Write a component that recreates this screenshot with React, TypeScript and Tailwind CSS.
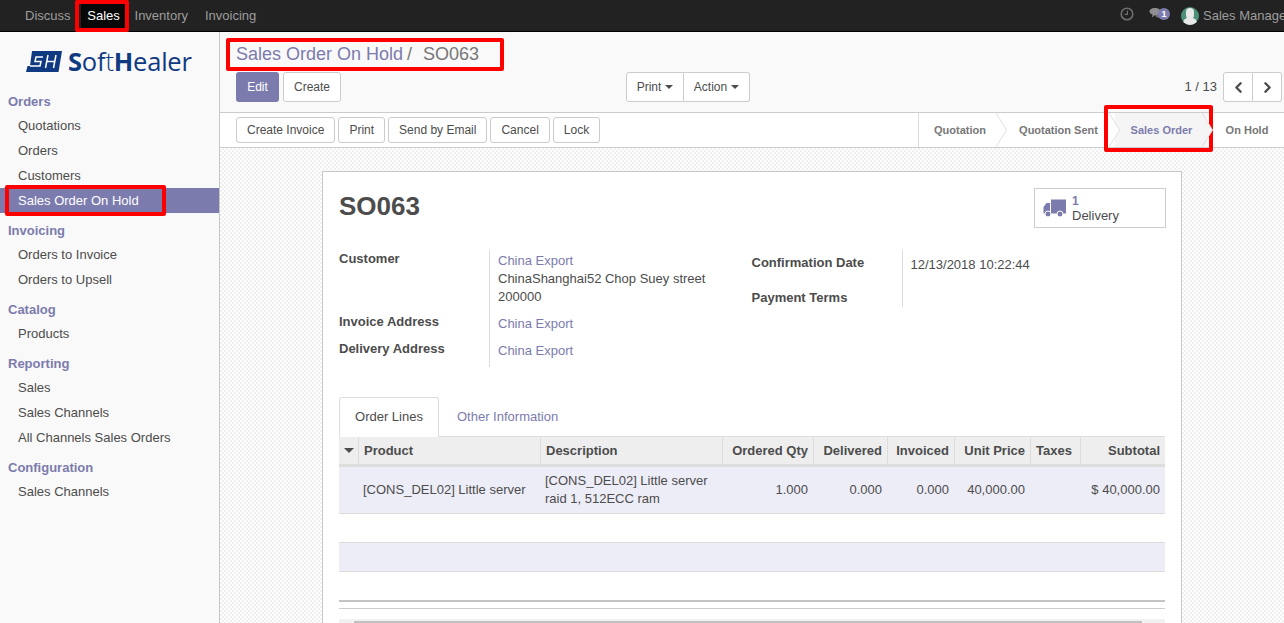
import { ChevronLeft, ChevronRight } from "lucide-react";

const btn =
  "h-[26px] px-[10px] bg-white border border-[#ccc] rounded-[3px] text-[12px] text-[#4c4c4c] flex items-center";

const menu = [
  { title: "Orders", items: ["Quotations", "Orders", "Customers", "Sales Order On Hold"] },
  { title: "Invoicing", items: ["Orders to Invoice", "Orders to Upsell"] },
  { title: "Catalog", items: ["Products"] },
  { title: "Reporting", items: ["Sales", "Sales Channels", "All Channels Sales Orders"] },
  { title: "Configuration", items: ["Sales Channels"] },
];

function RedBox({ className }: { className: string }) {
  return <div className={"absolute border-[4px] border-[#f00] rounded-[2px] pointer-events-none " + className} />;
}

function TopBar() {
  return (
    <header className="h-[32px] bg-[#222] border-b border-black flex items-stretch text-[13px] text-[#9d9d9d] shrink-0">
      <nav className="flex pl-[15px]">
        <a className="px-[10px] flex items-center">Discuss</a>
        <a className="px-[10px] flex items-center bg-[#080808] text-white w-[46px] justify-center">Sales</a>
        <a className="px-[10px] flex items-center ml-[-2px]">Inventory</a>
        <a className="px-[10px] flex items-center ml-[-3px]">Invoicing</a>
      </nav>
      <div className="ml-auto flex items-center overflow-hidden w-[177px] shrink-0">
        <svg width="14" height="14" viewBox="0 0 14 14" className="ml-[13px] mt-[-3px] shrink-0" fill="none" stroke="#6f6f6f" strokeWidth="1.6">
          <circle cx="7" cy="7" r="5.8" />
          <path d="M7.4 3.6V7.4H4.6" strokeWidth="1.2" />
        </svg>
        <div className="relative ml-[15px] w-[21px] h-[13px] shrink-0 mt-[-3px]">
          <svg width="17" height="13" viewBox="0 0 17 13" className="absolute left-0 top-0">
            <path d="M11 3c3 0 5 1.500 5 3.500 0 1.500-1 2.500-2.500 3L14 12l-3-2C8 10 6 8.500 6 6.500S8 3 11 3z" fill="#6f6f6f" />
            <path d="M6 0c3 0 5.500 1.500 5.500 3.500S9 7 6 7L3 9.500l.6-2.800C1.800 6 .5 5 .5 3.500 .5 1.500 3 0 6 0z" fill="#8f8f8f" />
          </svg>
          <span className="absolute left-[9px] top-0 w-[12px] h-[12px] rounded-full bg-[#7c7bad] text-white text-[9px] leading-[12px] text-center font-bold">1</span>
        </div>
        <div className="w-[18px] h-[18px] rounded-full bg-[#4d9078] ml-[11px] shrink-0 overflow-hidden relative">
          <div className="absolute left-[5px] top-[1px] w-[8px] h-[11px] rounded-full bg-[#e8e8e8]" />
          <div className="absolute left-[2px] top-[11px] w-[14px] h-[10px] rounded-full bg-[#e8e8e8]" />
        </div>
        <span className="ml-[4px] whitespace-nowrap">Sales Manager</span>
      </div>
    </header>
  );
}

function Sidebar() {
  return (
    <aside className="w-[220px] shrink-0 bg-[#f9f9f9] border-r border-[#c8c8c8] text-[13px]">
      <div className="h-[58px] pt-[16px] pl-[26px] flex items-start">
        <svg width="36" height="21" viewBox="0 0 36 21" className="shrink-0 mt-[3px]" fill="#0f3a82">
          <path d="M6 0H36L32.500 21H0L1.500 15H4z" />
          <path d="M17 6H10L9 10.500H15L14 15H4" fill="none" stroke="#fff" strokeWidth="1.5" />
          <path d="M22 4L19.500 17M30 4L27.500 17M21 10.500H29" fill="none" stroke="#fff" strokeWidth="1.5" />
        </svg>
        <span className="ml-[6px] text-[#0f3a82] text-[25.500px] leading-[26px] font-['Open_Sans',sans-serif] whitespace-nowrap tracking-[-0.2px]">
          <b className="font-bold">S</b>of<span className="font-light">t</span>
          <b className="font-bold">H</b>ealer
        </span>
      </div>
      {menu.map((g) => (
        <div key={g.title} className="mb-[6px]">
          <div className="h-[23px] pl-[8px] flex items-center font-bold text-[#7c7bad]">{g.title}</div>
          {g.items.map((i) => (
            <div
              key={i}
              className={
                "h-[25px] pl-[18px] flex items-center " +
                (i === "Sales Order On Hold" ? "bg-[#7c7bad] text-white" : "text-[#4c4c4c]")
              }
            >
              {i}
            </div>
          ))}
        </div>
      ))}
    </aside>
  );
}

function ControlPanel() {
  return (
    <div className="h-[81px] bg-[#f9f9f9] border-b border-[#ccc] pl-[16px] pr-[2px] shrink-0">
      <div className="h-[39px] flex items-center text-[18px] pt-[5px]">
        <span className="text-[#7c7bad]">Sales Order On Hold</span>
        <span className="text-[#777] ml-[4px]">/</span>
        <span className="text-[#777] ml-[11px]">SO063</span>
      </div>
      <div className="flex items-center text-[12px] h-[32px]">
        <div className="w-[390px] flex gap-[4px]">
          <button className="h-[30px] w-[43px] bg-[#7c7bad] rounded-[3px] text-white">Edit</button>
          <button className="h-[30px] w-[58px] bg-white border border-[#ccc] rounded-[3px] text-[#4c4c4c]">Create</button>
        </div>
        <div className="flex text-[#4c4c4c]">
          <button className="h-[30px] w-[58px] bg-white border border-[#ccc] rounded-l-[3px] flex items-center justify-center gap-[4px]">
            Print <i className="border-x-[4px] border-x-transparent border-t-[4px] border-t-[#4c4c4c]" />
          </button>
          <button className="h-[30px] w-[66px] bg-white border border-l-0 border-[#ccc] rounded-r-[3px] flex items-center justify-center gap-[4px]">
            Action <i className="border-x-[4px] border-x-transparent border-t-[4px] border-t-[#4c4c4c]" />
          </button>
        </div>
        <span className="ml-auto mr-[6px] text-[13px] text-[#4c4c4c]">1 / 13</span>
        <div className="flex text-[#4c4c4c]">
          <button className="h-[30px] w-[30px] bg-white border border-[#ccc] rounded-l-[3px] flex items-center justify-center">
            <ChevronLeft size={17} strokeWidth={3.4} />
          </button>
          <button className="h-[30px] w-[29px] bg-white border border-l-0 border-[#ccc] rounded-r-[3px] flex items-center justify-center">
            <ChevronRight size={17} strokeWidth={3.4} />
          </button>
        </div>
      </div>
    </div>
  );
}

function Step({ label, active, width }: { label: string; active?: boolean; width: string }) {
  return (
    <div
      className={
        "relative h-full flex items-center justify-center text-[11px] font-bold " +
        width +
        (active ? " bg-[#f5f5f5] text-[#7c7bad]" : " text-[#777]")
      }
    >
      {label}
    </div>
  );
}

function Chevron({ fill }: { fill: string }) {
  return (
    <svg width="11" height="34" viewBox="0 0 11 34" className="shrink-0 -mx-[5px] z-10" fill={fill} stroke="#e0e0e0">
      <path d="M0 0L10.500 17L0 34" />
    </svg>
  );
}

function StatusBar() {
  return (
    <div className="h-[35px] bg-white border-b border-[#ccc] pl-[16px] flex items-center gap-[3px] shrink-0">
      {["Create Invoice", "Print", "Send by Email", "Cancel", "Lock"].map((b) => (
        <button key={b} className={btn}>
          {b}
        </button>
      ))}
      <div className="ml-auto h-full flex items-center border-l border-[#ddd]">
        <Step label="Quotation" width="w-[82px]" />
        <Chevron fill="#fff" />
        <Step label="Quotation Sent" width="w-[112px] pl-[1px]" />
        <Chevron fill="#fff" />
        <Step label="Sales Order" width="w-[92px] pl-[1px]" active />
        <Chevron fill="#f5f5f5" />
        <Step label="On Hold" width="w-[76px] pl-[2px]" />
      </div>
    </div>
  );
}

function Field({ label, children, h }: { label: string; children: React.ReactNode; h: string }) {
  return (
    <div className={"flex " + h}>
      <div className="w-[150px] font-bold text-[#4c4c4c] shrink-0 leading-[18px]">{label}</div>
      <div className="border-l border-[#ddd] pl-[8px] pt-[2px] leading-[18px] flex-1">{children}</div>
    </div>
  );
}

const cols = "grid grid-cols-[20px_182px_182px_91px_74px_67px_76px_50px_84px]";
const heads = ["", "Product", "Description", "Ordered Qty", "Delivered", "Invoiced", "Unit Price", "Taxes", "Subtotal"];

function OrderSheet() {
  return (
    <div className="w-[860px] h-[500px] ml-[102px] mt-[23px] bg-white border border-[#c8c8c8] px-[16px] text-[13px] text-[#4c4c4c]">
      <div className="flex justify-between h-[78px] pt-[16px]">
        <h1 className="text-[26px] font-bold leading-[36px] text-[#4c4c4c]">SO063</h1>
        <div className="w-[132px] h-[40px] -mr-[1px] border border-[#ccc] flex items-center pl-[8px]">
          <svg width="24" height="20" viewBox="0 0 24 20" fill="#7c7bad" className="shrink-0">
            <path d="M8 1.500H23V15.500H8z" />
            <path d="M7 5H3.500L.500 9V15.500H7z" />
            <circle cx="5" cy="16" r="3" stroke="#fff" />
            <circle cx="17" cy="16" r="3" stroke="#fff" />
          </svg>
          <div className="ml-[5px]">
            <div className="text-[#7c7bad] font-bold text-[12px] leading-[14px] mt-[1px]">1</div>
            <div className="leading-[15px]">Delivery</div>
          </div>
        </div>
      </div>
      <div className="flex h-[147px]">
        <div className="w-[413px]">
          <Field label="Customer" h="h-[63px]">
            <div className="text-[#7c7bad]">China Export</div>
            <div className="w-[215px]">ChinaShanghai52 Chop Suey street 200000</div>
          </Field>
          <Field label="Invoice Address" h="h-[27px]">
            <div className="text-[#7c7bad]">China Export</div>
          </Field>
          <Field label="Delivery Address" h="h-[27px]">
            <div className="text-[#7c7bad]">China Export</div>
          </Field>
        </div>
        <div className="w-[414px]">
          <div className="flex h-[57px]">
            <div className="w-[150px] font-bold shrink-0 leading-[35px] -mt-[5px]">
              <div>Confirmation Date</div>
              <div>Payment Terms</div>
            </div>
            <div className="border-l border-[#ddd] pl-[8px] pt-[6px] leading-[18px]">12/13/2018 10:22:44</div>
          </div>
        </div>
      </div>
      <div className="h-[40px] flex border-b border-[#ddd]">
        <div className="w-[100px] h-[40px] pb-[1px] bg-white border border-b-0 border-[#ddd] rounded-t-[3px] flex items-center justify-center">
          Order Lines
        </div>
        <div className="ml-[18px] flex items-center text-[#7c7bad]">Other Information</div>
      </div>
      <div className={cols + " h-[30px] bg-[#eee] border-b-[3px] border-[#ddd] font-bold"}>
        {heads.map((h, i) => (
          <div
            key={i}
            className={
              "flex items-center px-[5px] border-r border-[#ddd] last:border-r-0 " +
              (i > 2 && i !== 7 ? "justify-end" : "")
            }
          >
            {i === 0 ? <i className="border-x-[5px] border-x-transparent border-t-[5px] border-t-[#4c4c4c]" /> : h}
          </div>
        ))}
      </div>
      <div className={cols + " h-[47px] bg-[#ecedf6] border-b border-[#ddd] items-center"}>
        <div />
        <div className="pl-[4px] whitespace-nowrap">[CONS_DEL02] Little server</div>
        <div className="pl-[4px] pr-[2px] leading-[18px]">[CONS_DEL02] Little server raid 1, 512ECC ram</div>
        <div className="text-right pr-[6px]">1.000</div>
        <div className="text-right pr-[6px]">0.000</div>
        <div className="text-right pr-[6px]">0.000</div>
        <div className="text-right pr-[6px]">40,000.00</div>
        <div />
        <div className="text-right pr-[5px]">$ 40,000.00</div>
      </div>
      <div className="h-[29px] border-b border-[#ddd]" />
      <div className="h-[29px] bg-[#ecedf6] border-b border-[#ddd]" />
      <div className="h-[28px]" />
      <div className="h-[9px] border-t-[2px] border-[#c4c4c4] border-b border-b-[#ccc]" />
      <div className="h-[10px]" />
      <div className="h-[5px] bg-[#f1f1f1] pl-[15px] pr-[23px] pt-[2px]">
        <div className="h-[3px] bg-[#c1c1c1]" />
      </div>
    </div>
  );
}

export default function App() {
  return (
    <div className="relative h-[623px] w-[1284px] overflow-hidden flex flex-col font-['Liberation_Sans',Arial,sans-serif] bg-white">
      <TopBar />
      <div className="flex flex-1 min-h-0">
        <Sidebar />
        <main className="flex-1 flex flex-col min-w-0">
          <ControlPanel />
          <StatusBar />
          <div className="flex-1 min-h-0 overflow-hidden bg-[repeating-conic-gradient(#f0f0f0_0_25%,#ffffff_0_50%)] bg-[length:4px_4px]">
            <OrderSheet />
          </div>
        </main>
      </div>
      <RedBox className="left-[75px] top-0 w-[54px] h-[32px]" />
      <RedBox className="left-[226px] top-[38px] w-[278px] h-[33px]" />
      <RedBox className="left-[1104px] top-[105px] w-[109px] h-[47px]" />
      <RedBox className="left-[5px] top-[185px] w-[161px] h-[31px]" />
    </div>
  );
}
